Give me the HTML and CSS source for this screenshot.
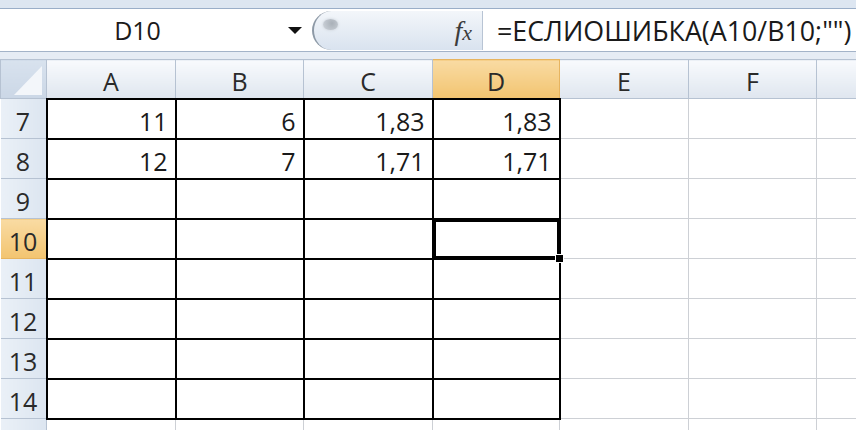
FILE: index.html
```html
<!DOCTYPE html>
<html lang="ru">
<head>
    <meta charset="UTF-8">
    <title>ЕСЛИОШИБКА</title>
    <link rel="stylesheet" href="styles.css">
</head>
<body>
    <div class="top-strip"></div>
    <div class="formula-bar">
        <div class="name-box">
            <span class="cell-ref">D10</span>
            <span class="arrow"></span>
        </div>
        <div class="fx-btn">
            <span class="knob"></span>
            <span class="fx"><i>f</i><i class="x">x</i></span>
        </div>
        <div class="formula">=ЕСЛИОШИБКА(A10/B10;"")</div>
    </div>
    <div class="bar-gap"></div>

    <div class="sheet-wrap">
        <table class="sheet">
            <colgroup>
                <col class="c-head">
                <col class="c-a">
                <col class="c-b">
                <col class="c-c">
                <col class="c-d">
                <col class="c-e">
                <col class="c-f">
                <col class="c-g">
            </colgroup>
            <tr class="col-row">
                <th class="corner"><span class="tri"></span></th>
                <th>A</th>
                <th>B</th>
                <th>C</th>
                <th class="sel">D</th>
                <th>E</th>
                <th>F</th>
                <th></th>
            </tr>
            <tr>
                <th class="row-h">7</th>
                <td class="b">11</td><td class="b">6</td><td class="b">1,83</td><td class="b">1,83</td>
                <td></td><td></td><td></td>
            </tr>
            <tr>
                <th class="row-h">8</th>
                <td class="b">12</td><td class="b">7</td><td class="b">1,71</td><td class="b">1,71</td>
                <td></td><td></td><td></td>
            </tr>
            <tr>
                <th class="row-h">9</th>
                <td class="b"></td><td class="b"></td><td class="b"></td><td class="b"></td>
                <td></td><td></td><td></td>
            </tr>
            <tr>
                <th class="row-h sel">10</th>
                <td class="b"></td><td class="b"></td><td class="b"></td><td class="b active"><span class="handle"></span></td>
                <td></td><td></td><td></td>
            </tr>
            <tr>
                <th class="row-h">11</th>
                <td class="b"></td><td class="b"></td><td class="b"></td><td class="b"></td>
                <td></td><td></td><td></td>
            </tr>
            <tr>
                <th class="row-h">12</th>
                <td class="b"></td><td class="b"></td><td class="b"></td><td class="b"></td>
                <td></td><td></td><td></td>
            </tr>
            <tr>
                <th class="row-h">13</th>
                <td class="b"></td><td class="b"></td><td class="b"></td><td class="b"></td>
                <td></td><td></td><td></td>
            </tr>
            <tr>
                <th class="row-h">14</th>
                <td class="b"></td><td class="b"></td><td class="b"></td><td class="b"></td>
                <td></td><td></td><td></td>
            </tr>
            <tr>
                <th class="row-h"></th>
                <td></td><td></td><td></td><td></td>
                <td></td><td></td><td></td>
            </tr>
        </table>
    </div>
</body>
</html>
```

FILE: styles.css
```css
body {
    margin: 0;
    width: 856px;
    height: 430px;
    overflow: hidden;
    background: #fff;
    font-family: "Open Sans", "Noto Sans", sans-serif;
    color: #1a1a1a;
}

.top-strip {
    height: 8px;
    background: #dde6f1;
    border-bottom: 1px solid #9aaec8;
}

.formula-bar {
    display: flex;
    height: 42px;
    background: #fff;
    border-bottom: 1px solid #a3b3c8;
}

.name-box {
    width: 312px;
    display: flex;
    align-items: center;
}

.cell-ref {
    width: 275px;
    text-align: center;
    font-size: 25px;
}

.arrow {
    width: 0;
    height: 0;
    margin-left: 13px;
    border-left: 7px solid transparent;
    border-right: 7px solid transparent;
    border-top: 7px solid #111;
}

.fx-btn {
    position: relative;
    width: 168px;
    margin: 2px 0 1px;
    border-radius: 20px 0 0 20px;
    border-left: 2px solid #8d99a6;
    border-right: 1px solid #b8c4d4;
    background: linear-gradient(#f3f6fa, #d9e3ef);
    display: flex;
    align-items: center;
    justify-content: flex-end;
}

.knob {
    position: absolute;
    left: 9px;
    top: 8px;
    width: 15px;
    height: 11px;
    border-radius: 50%;
    background: radial-gradient(circle at 60% 40%, #a9b0b8, #cfd5dc);
    box-shadow: 0 0 3px #c7cdd4;
}

.fx {
    margin-right: 10px;
    font-family: "Liberation Serif", serif;
    font-size: 28px;
    color: #3c3c3c;
}

.fx .x {
    font-size: 22px;
}

.formula {
    flex: 1;
    padding-left: 14px;
    display: flex;
    align-items: center;
    font-size: 26.8px;
    white-space: nowrap;
}

.bar-gap {
    height: 7px;
    background: #e6ecf4;
}

.sheet-wrap {
    width: 856px;
    height: 371px;
    overflow: hidden;
}

.sheet {
    border-collapse: collapse;
    table-layout: fixed;
    width: 944px;
    font-size: 25px;
    line-height: 1;
}

.c-head { width: 46px; }
.c-a { width: 129px; }
.c-b { width: 128px; }
.c-c { width: 129px; }
.c-d { width: 127px; }
.c-e { width: 129px; }
.c-f { width: 128px; }
.c-g { width: 128px; }

.sheet tr {
    height: 40px;
}

.sheet tr.col-row {
    height: 39px;
}

.sheet th {
    font-weight: normal;
    color: #2a2a2a;
    padding: 5px 0 0;
}

.col-row th {
    border: 1px solid #b6c2d2;
    background: linear-gradient(#f8fafd, #dfe6ef);
}

.corner {
    position: relative;
    background: linear-gradient(#d8e2ee, #cbd7e6) !important;
}

.tri {
    position: absolute;
    right: 4px;
    bottom: 3px;
    width: 0;
    height: 0;
    border-left: 28px solid transparent;
    border-bottom: 29px solid #f3f6fa;
}

.row-h {
    border: 1px solid #b6c2d2;
    border-left: none;
    background: linear-gradient(90deg, #eaf0f7, #dce5f0);
}

.sheet th.sel {
    background: linear-gradient(#f9dba3, #f2c470);
    border-color: #e7b45f;
}

.row-h.sel {
    background: linear-gradient(90deg, #f9dba3, #f2c470);
}

.sheet td {
    border: 1px solid #cdd0d5;
    text-align: right;
    padding: 5px 7px 0 0;
    vertical-align: middle;
}

.sheet td.b {
    border: 2px solid #000;
}

.sheet td.active {
    position: relative;
    box-shadow: inset 0 0 0 2px #000;
}

.handle {
    position: absolute;
    right: -5px;
    bottom: -5px;
    width: 7px;
    height: 7px;
    background: #000;
    border: 1px solid #fff;
}
```
